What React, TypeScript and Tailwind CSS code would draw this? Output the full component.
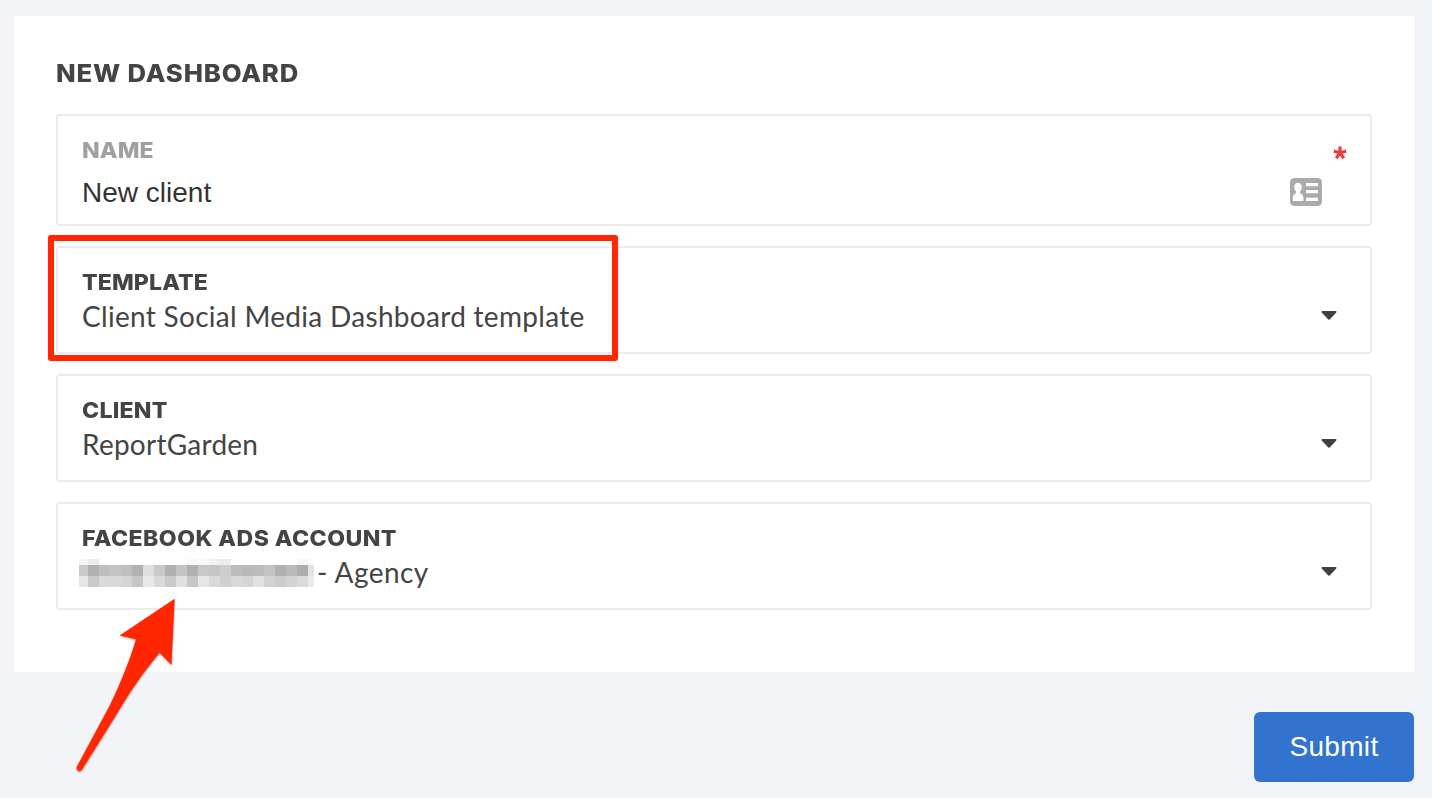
import type { ReactNode } from 'react'
import clsx from 'clsx'

// grey levels of the redacted account name, one triple (top, middle, bottom) per column
const MOSAIC = [
  ['#f5f5f5', '#c9c9c9', '#e5e5e5'],
  ['#ececec', '#b1b1b1', '#c9c9c9'],
  ['#fff', '#bebebe', '#dadada'],
  ['#fff', '#c4c4c4', '#d9d9d9'],
  ['#fff', '#bfbfbf', '#d5d5d5'],
  ['#fff', '#b1b1b1', '#c6c6c6'],
  ['#fff', '#dedede', '#e9e9e9'],
  ['#fff', '#c9c9c9', '#d9d9d9'],
  ['#fff', '#b0b0b0', '#cacaca'],
  ['#fff', '#c4c4c4', '#e0e0e0'],
  ['#f8f8f8', '#b1b1b1', '#c6c6c6'],
  ['#f8f8f8', '#c8c8c8', '#e6e6e6'],
  ['#f1f1f1', '#c5c5c5', '#dadada'],
  ['#ececec', '#cdcdcd', '#d0d0d0'],
  ['#fff', '#bcbcbc', '#d9d9d9'],
  ['#fff', '#b9b9b9', '#d5d5d5'],
  ['#fff', '#bcbcbc', '#e1e1e1'],
  ['#fff', '#c4c4c4', '#d2d2d2'],
  ['#fff', '#b1b1b1', '#cccccc'],
  ['#fff', '#bababa', '#d3d3d3'],
  ['#f8f8f8', '#adadad', '#dadada'],
  ['#fbfbfb', '#e4e4e4', '#eaeaea'],
]

function Redacted() {
  return (
    <div className="mt-0.5 -ml-[3px] flex w-[235px] overflow-hidden">
      {MOSAIC.map((col, i) => (
        <div key={i} className={clsx('shrink-0', i === 0 ? 'w-[9px]' : 'w-[11px]')}>
          <div className="h-1.5" style={{ background: col[0] }} />
          <div className="h-[11px]" style={{ background: col[1] }} />
          <div className="h-[11px]" style={{ background: col[2] }} />
        </div>
      ))}
    </div>
  )
}

function Caret() {
  return (
    <svg className="mt-[51px] h-[9px] w-4" viewBox="0 0 16 9">
      <path d="M1.2 0H14.8Q16 .4 15.2 1.4L9 8.3Q8 9.2 7 8.3L.8 1.4Q0 .4 1.2 0Z" fill="#404040" />
    </svg>
  )
}

interface SelectFieldProps {
  label: string
  labelClass: string
  highlighted?: boolean
  children: ReactNode
}

function SelectField({ label, labelClass, highlighted, children }: SelectFieldProps) {
  return (
    <div className="relative flex h-[108px] justify-between rounded border-2 border-[#ebebeb] pt-3 pr-[33px] pl-6">
      <div>
        <div className={clsx('h-11 origin-left font-[Inter] text-[22px] leading-[44px] font-extrabold whitespace-nowrap', labelClass)}>{label}</div>
        <div className="-mt-1 flex h-8 items-center font-[Lato] text-[28px] leading-8 whitespace-nowrap">{children}</div>
      </div>
      <Caret />
      {highlighted && (
        <div className="absolute -top-[13px] -left-[10px] h-[126px] w-[570px] rounded-[3px] border-6 border-[#ff2600] shadow-[0_0_1px_#ff260080]" />
      )}
    </div>
  )
}

function ContactCard() {
  return (
    <svg className="h-7 w-8" viewBox="0 0 32 28">
      <rect width="32" height="28" rx="4.5" fill="#aaa" />
      <g fill="#fff">
        <ellipse cx="8" cy="9.3" rx="3.9" ry="4.5" />
        <path d="M6 12h4v3.2c2.4.8 3.4 2.4 3.4 4.8v3H2.8v-3c0-2.4 1-4 3.2-4.8z" />
        <path d="M16 5h12v3.3H16zM16 12h12v3.3H16zM16 19.7h12V23H16z" />
      </g>
    </svg>
  )
}

function Arrow() {
  return (
    <svg className="pointer-events-none absolute top-[590px] left-[60px] h-[190px] w-[140px] drop-shadow-[0_1px_1px_rgba(0,0,0,0.35)]" viewBox="0 0 140 190">
      <path
        d="M114.7 8.7 59.7 45.5 76 49.3C70 70 61 92 50 115L16.7 177Q16 180.7 19 181.3Q21 181.5 22.5 179L55 127C70 102 81 85 99.7 62.7L111.5 75Z"
        fill="#ff2600"
      />
    </svg>
  )
}

export default function App() {
  return (
    <div className="relative h-[798px] w-[1432px] overflow-hidden bg-[#f2f4f8] px-3.5 pt-4 text-[#444]">
      <div className="mr-1 h-[656px] bg-white px-[42px] pt-[42px]">
        <h1 className="h-8 origin-left scale-x-[1.07] font-[Inter] text-[24px] leading-8 font-extrabold tracking-[0.8px] whitespace-nowrap">NEW DASHBOARD</h1>
        <div className="mt-6 flex flex-col gap-5">
          <div className="flex h-28 justify-between rounded border-2 border-[#ebebeb] pt-3 pr-[23px] pl-6">
            <div>
              <div className="h-11 origin-left scale-x-[1.05] font-[Inter] text-[22px] leading-[44px] font-extrabold tracking-[0.1px] text-[#a0a0a0]">NAME</div>
              <div className="mt-px font-['Liberation_Sans'] text-[28px] leading-10 text-[#333]">New client</div>
            </div>
            <div className="flex">
              <div className="mt-[50px]">
                <ContactCard />
              </div>
              <svg className="mt-[18px] ml-[11px] h-[14px] w-[14px]" viewBox="-7 -7 14 14">
                <path d="M0 0V-6.5M0 0 6.2-2M0 0 3.8 5.3M0 0-3.8 5.3M0 0-6.2-2" stroke="#e53e3e" strokeWidth="3.2" />
              </svg>
            </div>
          </div>
          <SelectField label="TEMPLATE" labelClass="scale-x-[1.05] tracking-[0.1px]" highlighted>
            <span className="tracking-[0.3px]">Client Social Media Dashboard template</span>
          </SelectField>
          <SelectField label="CLIENT" labelClass="scale-x-[1.05] tracking-[0.2px]">
            <span className="tracking-[0.25px]">ReportGarden</span>
          </SelectField>
          <SelectField label="FACEBOOK ADS ACCOUNT" labelClass="scale-x-[1.05] tracking-[0.4px]">
            <Redacted />
            <span className="ml-[3px] tracking-[0.45px]">- Agency</span>
          </SelectField>
        </div>
      </div>
      <div className="mt-10 mr-1 flex justify-end">
        <button className="h-[70px] w-40 rounded-md bg-[#3273cf] font-['Liberation_Sans'] text-[28px] tracking-[0.3px] text-white">Submit</button>
      </div>
      <Arrow />
    </div>
  )
}
